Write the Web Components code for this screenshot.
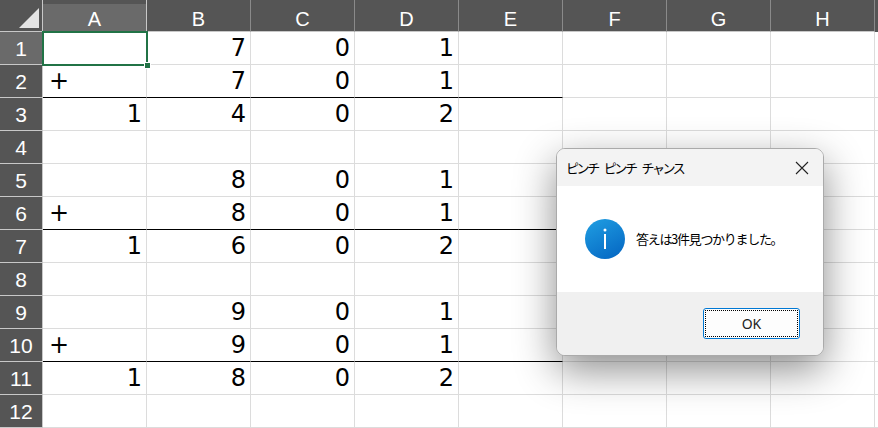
<!DOCTYPE html>
<html lang="ja">
<head>
<meta charset="utf-8">
<title>ピンチ ピンチ チャンス</title>
<style>
  html, body { margin: 0; padding: 0; background: #fff; overflow: hidden; }
</style>
</head>
<body>
<xl-sheet>
  <msg-box slot="overlay" caption="ピンチ ピンチ チャンス" button="OK">
    <info-icon slot="icon"></info-icon>
    答えは3件見つかりました。
  </msg-box>
</xl-sheet>

<script>
(() => {
  const COLS = ['A', 'B', 'C', 'D', 'E', 'F', 'G', 'H'];
  const ROWS = 12;
  const RULED_ROWS = [2, 6, 10];
  const DATA = {
    1: ['', '7', '0', '1'],
    2: ['+', '7', '0', '1'],
    3: ['1', '4', '0', '2'],
    5: ['', '8', '0', '1'],
    6: ['+', '8', '0', '1'],
    7: ['1', '6', '0', '2'],
    9: ['', '9', '0', '1'],
    10: ['+', '9', '0', '1'],
    11: ['1', '8', '0', '2'],
  };

  class XlSheet extends HTMLElement {
    constructor() {
      super();
      this.attachShadow({ mode: 'open' });
    }

    connectedCallback() {
      const head = COLS.map((c, i) => `<div class="ch${i === 0 ? ' on' : ''}">${c}</div>`).join('');
      let body = '';
      for (let r = 1; r <= ROWS; r++) {
        const vals = DATA[r] || [];
        body += `<div class="rh${r === 1 ? ' on' : ''}">${r}</div>`;
        COLS.forEach((c, i) => {
          const v = vals[i] || '';
          const cls = ['cell'];
          if (v === '+') cls.push('left');
          if (RULED_ROWS.includes(r) && i < 5) cls.push('ruled');
          if (r === 1 && i === 0) cls.push('sel');
          body += `<div class="${cls.join(' ')}">${v}</div>`;
        });
        body += '<div class="cell tail"></div>';
      }

      this.shadowRoot.innerHTML = `
        <style>
          :host {
            display: block;
            position: relative;
            width: 878px;
            height: 428px;
            overflow: hidden;
            background: #fff;
            font-family: "DejaVu Sans", sans-serif;
          }
          .grid {
            display: grid;
            grid-template-columns: 43px repeat(8, 104px) 3px;
            grid-template-rows: 32px repeat(12, 33px);
          }
          .corner {
            background: #555;
            border-right: 1px solid #c8c8c8;
            border-bottom: 1px solid #c8c8c8;
            box-sizing: border-box;
            position: relative;
          }
          .corner svg { position: absolute; left: 18px; top: 7px; }
          .ch, .rh {
            box-sizing: border-box;
            background: #555;
            color: #fff;
            font-family: "Liberation Sans", sans-serif;
            display: flex;
            align-items: center;
            justify-content: center;
          }
          .ch {
            font-size: 20px;
            border-right: 1px solid #8a8a8a;
            border-bottom: 1px solid #c8c8c8;
            padding-top: 7px;
            line-height: 20px;
          }
          .rh {
            font-size: 21px;
            border-right: 1px solid #c8c8c8;
            border-bottom: 1px solid #c8c8c8;
            padding-top: 1px;
          }
          .on { background: #6a6a6a; }
          .ch.on { background: linear-gradient(#555 4px, #6a6a6a 4px); border-right-color: #c8c8c8; }
          .cell {
            box-sizing: border-box;
            border-right: 1px solid #dcdcdc;
            border-bottom: 1px solid #dcdcdc;
            color: #000;
            font-size: 24px;
            line-height: 32px;
            text-align: right;
            padding-right: 4px;
            position: relative;
          }
          .cell.left { text-align: left; padding-left: 6px; }
          .cell.ruled { border-bottom-color: #000; }
          .cell.sel { outline: 2px solid #217346; outline-offset: -1px; border: 0; z-index: 1; }
          .cell.sel::after {
            content: '';
            position: absolute;
            right: -4px;
            bottom: -4px;
            width: 5px;
            height: 5px;
            background: #217346;
            border: 1px solid #fff;
            box-sizing: content-box;
          }
          .tail { border-right: 0; padding: 0; }
          .overlay { position: absolute; left: 556px; top: 148px; }
        </style>
        <div class="grid">
          <div class="corner">
            <svg width="21" height="21" viewBox="0 0 21 21"><path d="M1 21 L21 1 V21 Z" fill="#e4e4e4"/></svg>
          </div>
          ${head}
          <div class="ch" style="border:0"></div>
          ${body}
        </div>
        <div class="overlay"><slot name="overlay"></slot></div>
      `;
    }
  }

  class MsgBox extends HTMLElement {
    constructor() {
      super();
      this.attachShadow({ mode: 'open' });
    }

    connectedCallback() {
      this.shadowRoot.innerHTML = `
        <style>
          :host {
            display: flex;
            flex-direction: column;
            box-sizing: border-box;
            width: 268px;
            height: 208px;
            border: 1px solid #aaa;
            border-radius: 9px;
            overflow: hidden;
            background: #fff;
            box-shadow: 0 14px 40px rgba(0, 0, 0, .45);
            font: 13px "Noto Sans CJK JP", sans-serif;
            color: #000;
          }
          .title {
            height: 37px;
            flex: none;
            display: flex;
            align-items: center;
            justify-content: space-between;
            padding: 0 14px 0 9px;
            background: #f3f3f3;
          }
          .title span { letter-spacing: -2.4px; word-spacing: 5.4px; }
          .title svg { display: block; }
          .main {
            flex: 1;
            display: flex;
            align-items: center;
            gap: 11px;
            padding: 0 0 0 28px;
            background: #fff;
          }
          .main span { letter-spacing: -1.3px; margin-top: -1px; }
          .foot {
            height: 63px;
            flex: none;
            display: flex;
            justify-content: flex-end;
            padding: 16px 23px 0 0;
            box-sizing: border-box;
            background: #f0f0f0;
          }
          .btn {
            box-sizing: border-box;
            width: 97px;
            height: 31px;
            border: 1px solid #0078d4;
            border-radius: 3px;
            background: #fdfdfd;
            padding: 1px;
          }
          .btn span {
            display: flex;
            align-items: center;
            justify-content: center;
            box-sizing: border-box;
            height: 100%;
            border: 1px dotted #000;
            font: 14px "Noto Sans", sans-serif;
            color: #222;
          }
        </style>
        <div class="title">
          <span>${this.getAttribute('caption')}</span>
          <svg width="14" height="14" viewBox="0 0 14 14"><path d="M1 1 L13 13 M13 1 L1 13" stroke="#222" stroke-width="1.1" fill="none"/></svg>
        </div>
        <div class="main">
          <slot name="icon"></slot>
          <span><slot></slot></span>
        </div>
        <div class="foot">
          <div class="btn"><span>${this.getAttribute('button')}</span></div>
        </div>
      `;
    }
  }

  class InfoIcon extends HTMLElement {
    constructor() {
      super();
      this.attachShadow({ mode: 'open' });
      this.shadowRoot.innerHTML = `
        <style>
          :host { display: block; width: 40px; height: 40px; }
          svg { display: block; }
        </style>
        <svg width="40" height="40" viewBox="0 0 40 40">
          <defs>
            <linearGradient id="g" x1="0.2" y1="0" x2="0.75" y2="1">
              <stop offset="0" stop-color="#1e9be0"/>
              <stop offset="1" stop-color="#0669c4"/>
            </linearGradient>
          </defs>
          <circle cx="20" cy="20" r="20" fill="url(#g)"/>
          <circle cx="20" cy="11" r="1.5" fill="#fff"/>
          <rect x="19" y="15" width="2" height="15" fill="#fff"/>
        </svg>
      `;
    }
  }

  customElements.define('info-icon', InfoIcon);
  customElements.define('msg-box', MsgBox);
  customElements.define('xl-sheet', XlSheet);
})();
</script>
</body>
</html>
